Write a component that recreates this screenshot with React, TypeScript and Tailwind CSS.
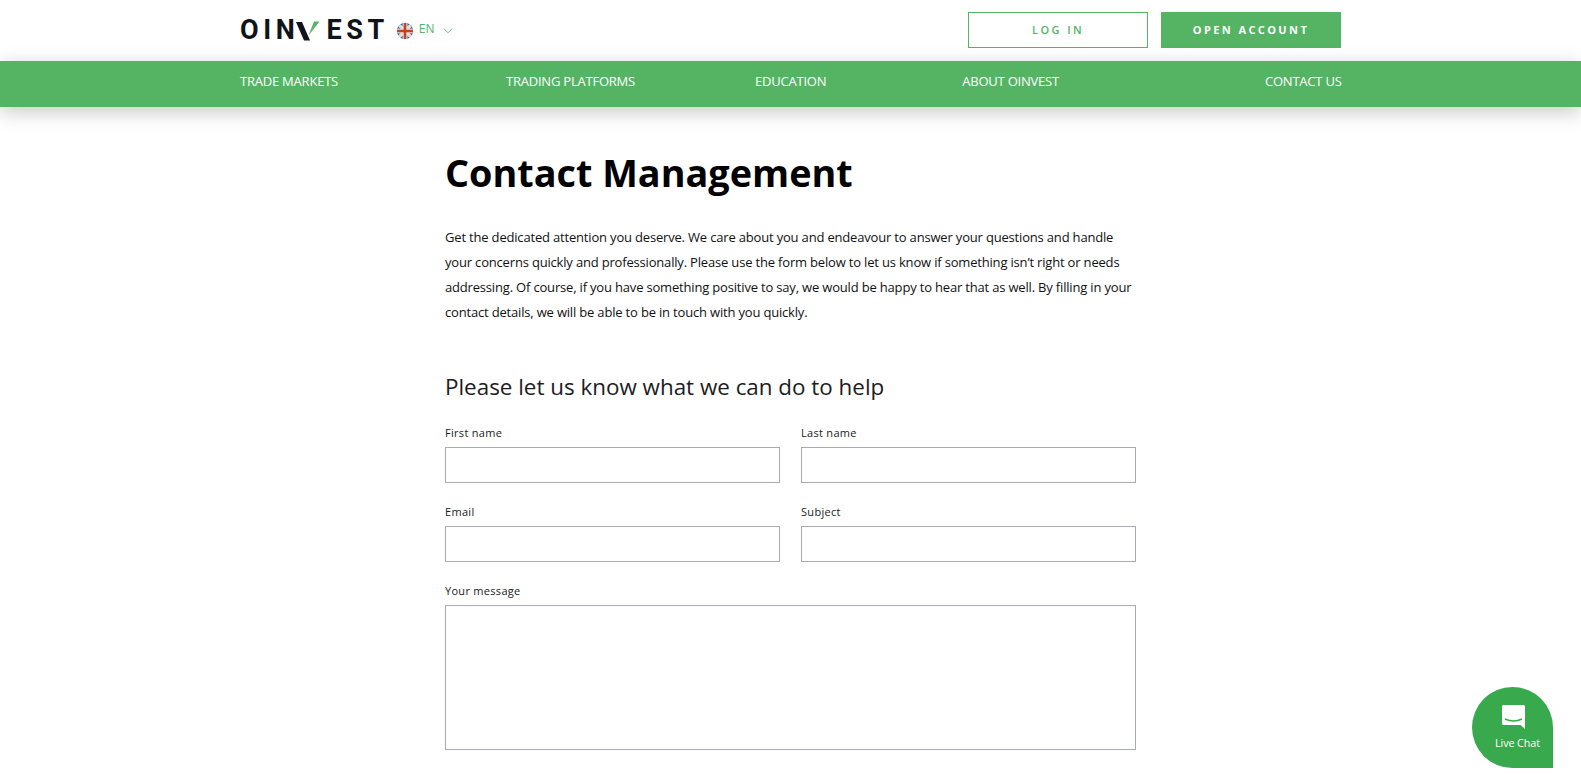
import React from 'react';
import { ChevronDown } from 'lucide-react';

const navItems = [
  { label: 'TRADE MARKETS', className: '' },
  { label: 'TRADING PLATFORMS', className: 'ml-[168px]' },
  { label: 'EDUCATION', className: 'ml-[120px]' },
  { label: 'ABOUT OINVEST', className: 'ml-[136px]' },
  { label: 'CONTACT US', className: 'ml-[206px]' },
];

const Flag = () => (
  <svg width="16" height="16" viewBox="0 0 16 16" className="block">
    <defs>
      <clipPath id="flag-clip">
        <circle cx="8" cy="8" r="8" />
      </clipPath>
    </defs>
    <g clipPath="url(#flag-clip)">
      <rect width="16" height="16" fill="#1f4e9c" />
      <path d="M0 0L16 16M16 0L0 16" stroke="#e8dcd8" strokeWidth="3.5" />
      <path d="M8 0V16M0 8H16" stroke="#e8dcd8" strokeWidth="5" />
      <path d="M8 0V16M0 8H16" stroke="#c0441c" strokeWidth="2.6" />
    </g>
  </svg>
);

const Logo = () => (
  <div className="flex items-center font-['Roboto',sans-serif] text-[27px] leading-none font-bold text-[#10141a] tracking-[4.6px]">
    <span>OIN</span>
    <svg width="25" height="20" viewBox="0 0 25 20" className="block -ml-[3px] mr-[5px]">
      <path d="M0 1H6L14 19.5H8Z" fill="#10141a" />
      <path d="M12.5 14.5L18 0.5H23.5Z" fill="#54b464" />
    </svg>
    <span>EST</span>
  </div>
);

const Field = ({ label }: { label: string }) => (
  <div className="w-[335px]">
    <label className="block text-[11px] leading-[15px] tracking-[0.3px] text-[#1a1a22] mb-[7px]">{label}</label>
    <input className="block w-full h-[36px] border border-[#a8abb5] bg-white outline-none" />
  </div>
);

const App: React.FC = () => {
  return (
    <div className="h-[774px] overflow-hidden relative bg-white font-['Open_Sans',sans-serif]">
      <header className="h-[61px] bg-white">
        <div className="ml-[240px] w-[1101px] h-full flex items-center justify-between">
          <div className="flex items-center">
            <Logo />
            <div className="ml-[8px] flex items-center">
              <Flag />
              <span className="ml-[6px] text-[12px] text-[#54b464] leading-none -mt-[3px]">EN</span>
              <ChevronDown className="w-[14px] h-[14px] ml-[7px] text-[#54b464]" strokeWidth={1.5} />
            </div>
          </div>
          <div className="flex gap-[13px] -mt-[1px]">
            <button className="w-[180px] h-[36px] border border-[#54b464] bg-white text-[#54b464] text-[11px] font-semibold tracking-[2.4px]">
              LOG IN
            </button>
            <button className="w-[180px] h-[36px] bg-[#54b464] text-white text-[11px] font-bold tracking-[2.4px]">
              OPEN ACCOUNT
            </button>
          </div>
        </div>
      </header>

      <nav className="h-[46px] bg-[#54b464] shadow-[0_5px_20px_rgba(0,0,0,0.22)] relative">
        <div className="ml-[240px] w-[1102px] flex pt-[11px]">
          {navItems.map((item) => (
            <a key={item.label} className={`text-[13px] leading-[18px] tracking-[-0.22px] text-white whitespace-nowrap ${item.className}`}>
              {item.label}
            </a>
          ))}
        </div>
      </nav>

      <main className="ml-[445px] w-[691px]">
        <h1 className="text-[37.8px] leading-[48px] font-bold text-black mt-[42px]">Contact Management</h1>
        <p className="text-[13px] leading-[25px] tracking-[-0.18px] text-[#111] mt-[28px] w-[691px]">
          Get the dedicated attention you deserve. We care about you and endeavour to answer your questions and handle
          your concerns quickly and professionally. Please use the form below to let us know if something isn’t right or needs
          addressing. Of course, if you have something positive to say, we would be happy to hear that as well. By filling in your
          contact details, we will be able to be in touch with you quickly.
        </p>
        <h2 className="text-[22.4px] leading-[30px] font-medium text-[#1c1c24] mt-[47px]">Please let us know what we can do to help</h2>
        <form className="mt-[23px]">
          <div className="grid grid-cols-[335px_335px] gap-x-[21px] gap-y-[21px]">
            <Field label="First name" />
            <Field label="Last name" />
            <Field label="Email" />
            <Field label="Subject" />
          </div>
          <div className="mt-[21px]">
            <label className="block text-[11px] leading-[15px] tracking-[0.3px] text-[#1a1a22] mb-[7px]">Your message</label>
            <textarea className="block w-full h-[145px] border border-[#a8abb5] bg-white outline-none resize-none" />
          </div>
        </form>
      </main>

      <button className="absolute left-[1472px] top-[687px] w-[81px] h-[81px] bg-[#38a94d] rounded-[50%_50%_0_50%] flex flex-col items-center text-white">
        <svg width="25" height="26" viewBox="0 0 25 26" className="mt-[17px] ml-[1px]">
          <path d="M2.5 1H22.5Q24 1 24 2.5V25L19.5 21H2.5Q1 21 1 19.5V2.5Q1 1 2.5 1Z" fill="#fff" />
          <path d="M4 15Q12.5 19 21 15" stroke="#38a94d" strokeWidth="1.4" fill="none" />
        </svg>
        <span className="text-[10.8px] leading-[14px] font-medium mt-[6px] ml-[10px] tracking-[-0.1px]">Live Chat</span>
      </button>
    </div>
  );
};

export default App;
